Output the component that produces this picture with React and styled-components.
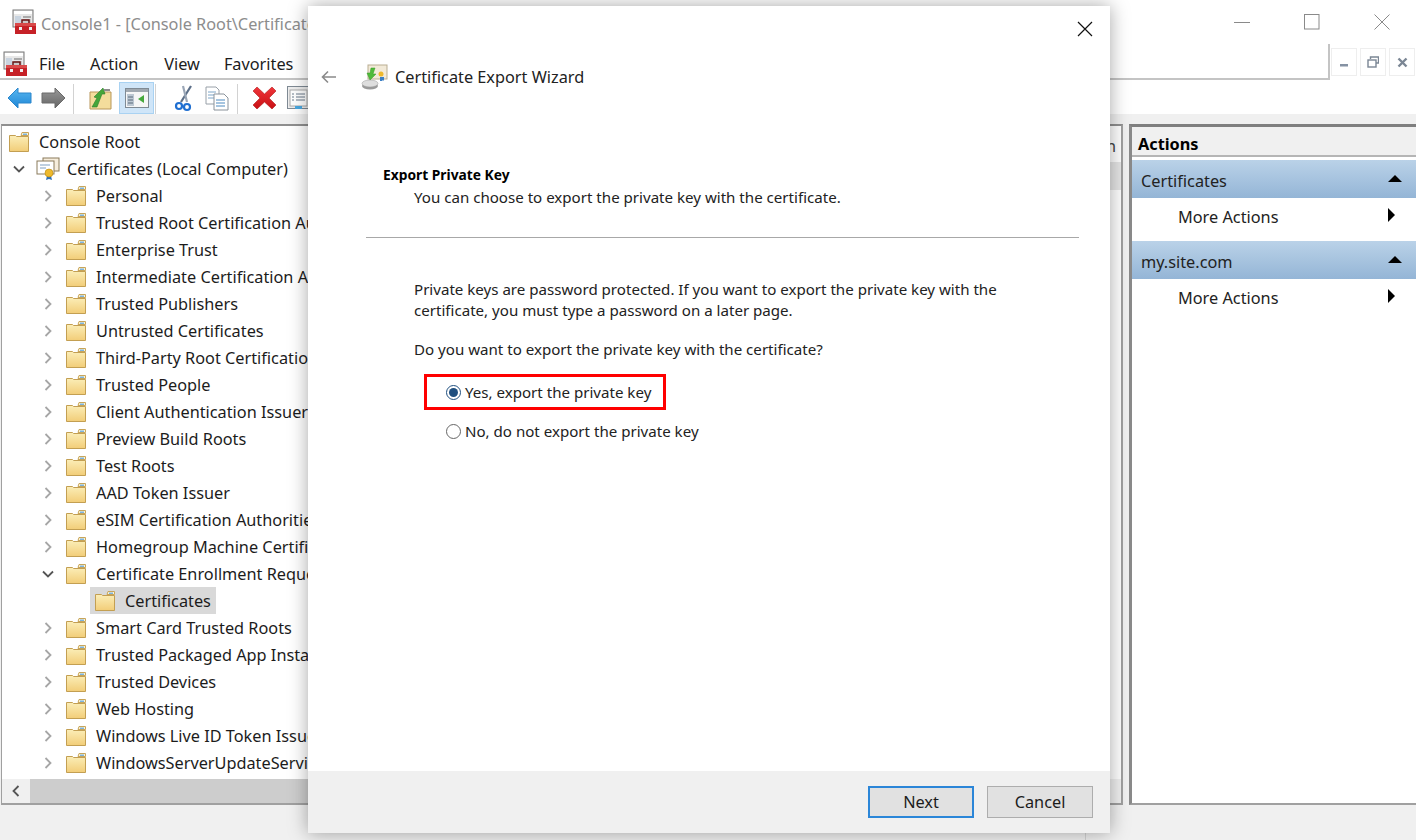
import React from "react";
import styled, { createGlobalStyle } from "styled-components";

const FONT = `"Noto Sans", "Open Sans", "Liberation Sans", sans-serif`;

const Global = createGlobalStyle`
  html, body { margin: 0; padding: 0; background: #fff; }
  body { font-family: ${FONT}; color: #1a1a1a; }
  #root { width: 1416px; height: 840px; overflow: hidden; }
`;

const Desktop = styled.div`
  position: relative;
  width: 1416px;
  height: 840px;
  overflow: hidden;
  background: #f0f0f0;
  display: flex;
  flex-direction: column;
  font-size: 16.3px;
`;
const TitleBar = styled.div`
  height: 44px;
  background: #fff;
  display: flex;
  align-items: center;
  padding-left: 12px;
  flex: none;
`;
const TitleText = styled.span`
  margin-left: 3px;
  padding-top: 3px;
  color: #8d8d8d;
  flex: 1;
  white-space: nowrap;
  overflow: hidden;
`;
const WinControls = styled.div`
  display: flex;
  align-items: center;
  height: 100%;
  margin-right: 26px;
  gap: 54px;
  & svg { display: block; }
`;
const MenuBar = styled.div`
  height: 36px;
  background: #fff;
  display: flex;
  align-items: stretch;
  flex: none;
`;
const MenuLeft = styled.div`
  flex: 1;
  display: flex;
  align-items: center;
  padding: 5px 0 0 3px;
  border-bottom: 2px solid #c4c4c4;
  border-right: 2px solid #c4c4c4;
`;
const MenuItem = styled.span`
  margin-left: ${(p) => p.$gap}px;
  color: #1c1c1c;
`;
const MdiControls = styled.div`
  width: 86px;
  display: flex;
  gap: 3px;
  padding: 4px 0 0 1px;
  box-sizing: border-box;
`;
const MdiButton = styled.div`
  width: 26px;
  height: 28px;
  display: flex;
  align-items: center;
  justify-content: center;
  background: #fff;
  border: 1px solid #eeeeee;
  box-sizing: border-box;
`;
const Toolbar = styled.div`
  height: 34px;
  background: #fff;
  display: flex;
  align-items: flex-end;
  flex: none;
  padding-left: 7px;
`;
const ToolIcon = styled.div`
  margin-left: ${(p) => p.$gap || 0}px;
  width: ${(p) => p.$w}px;
  height: 32px;
  display: flex;
  align-items: center;
  justify-content: center;
  box-sizing: border-box;
  ${(p) => p.$active && `background:#cfe5f8;border:1px solid #a9d2f2;`}
`;
const ToolSep = styled.div`
  width: 1px;
  height: 30px;
  background: #d2d2d2;
  margin-left: ${(p) => p.$gap}px;
  align-self: flex-end;
`;
const Panes = styled.div`
  flex: 1;
  min-height: 0;
  display: flex;
  margin-top: 10px;
  background: #f0f0f0;
`;
const TreePane = styled.div`
  width: 320px;
  flex: none;
  margin-left: 1px;
  border-top: 2px solid #8f8f8f;
  border-left: 1px solid #a0a0a0;
  border-bottom: 2px solid #a0a0a0;
  background: #fff;
  display: flex;
  flex-direction: column;
  box-sizing: border-box;
  overflow: hidden;
`;
const ListPane = styled.div`
  width: 802px;
  flex: none;
  border-top: 2px solid #8f8f8f;
  border-bottom: 2px solid #a0a0a0;
  border-right: 2px solid #a0a0a0;
  background: #fff;
  display: flex;
  flex-direction: column;
  box-sizing: border-box;
`;
const ListHeader = styled.div`
  height: 36px;
  flex: none;
  text-align: right;
  padding: 8px 5px 0 0;
  box-sizing: border-box;
  line-height: 24px;
  color: #444;
`;
const ListRow = styled.div`
  height: 28px;
  flex: none;
  background: #e6e6e6;
`;
const ListFill = styled.div`
  flex: 1;
`;
const TreeList = styled.div`
  flex: 1;
  padding-top: 2px;
  overflow: hidden;
`;
const Row = styled.div`
  height: 27px;
  display: flex;
  align-items: center;
  padding-left: ${(p) => p.$indent}px;
  white-space: nowrap;
`;
const Chevron = styled.span`
  width: 16px;
  margin-right: ${(p) => p.$mr}px;
  display: flex;
  justify-content: center;
  flex: none;
`;
const RowLabel = styled.span`
  margin-left: ${(p) => p.$ml ?? 9}px;
  color: #1c1c1c;
`;
const Selected = styled.div`
  display: flex;
  align-items: center;
  height: 27px;
  background: #d9d9d9;
  padding: 0 5px 0 4px;
`;
const HScroll = styled.div`
  height: 24px;
  background: #f0f0f0;
  display: flex;
  flex: none;
`;
const ScrollBtn = styled.div`
  width: 28px;
  display: flex;
  align-items: center;
  justify-content: center;
`;
const ScrollThumb = styled.div`
  flex: 1;
  background: #cdcdcd;
`;
const ActionsPane = styled.div`
  margin-left: 6px;
  flex: 1;
  border-top: 3px solid #7f7f7f;
  border-left: 3px solid #8a8a8a;
  border-bottom: 2px solid #a0a0a0;
  background: #fff;
  box-sizing: border-box;
`;
const ActionsTitle = styled.div`
  height: 30px;
  background: #f0f0f0;
  border-bottom: 2px solid #b5b5b5;
  box-sizing: border-box;
  padding: 6px 0 0 6px;
  font-weight: 700;
  line-height: 22px;
  color: #000;
`;
const SectionHead = styled.div`
  height: 38px;
  margin-top: ${(p) => p.$mt}px;
  background: linear-gradient(#bad2e8, #94b5d6);
  display: flex;
  align-items: center;
  justify-content: space-between;
  padding: 4px 14px 0 9px;
  box-sizing: border-box;
  color: #222;
`;
const ActionRow = styled.div`
  height: 38px;
  display: flex;
  align-items: center;
  justify-content: space-between;
  padding: 0 14px 0 46px;
  color: #222;
`;
const UpTri = styled.span`
  width: 0;
  height: 0;
  margin-top: -6px;
  border-left: 7px solid transparent;
  border-right: 7px solid transparent;
  border-bottom: 7px solid #000;
`;
const RightTri = styled.span`
  width: 0;
  height: 0;
  margin-right: 7px;
  margin-top: -5px;
  border-top: 7px solid transparent;
  border-bottom: 7px solid transparent;
  border-left: 7px solid #000;
`;
const StatusBar = styled.div`
  height: 35px;
  flex: none;
  background: #f0f0f0;
  padding-left: 1085px;
  display: flex;
`;
const StatusCell = styled.div`
  flex: 1;
  border-left: 1px solid #d4d4d4;
`;

/* Wizard window lies over the console */
const Wizard = styled.div`
  position: absolute;
  left: 308px;
  top: 6px;
  width: 802px;
  height: 827px;
  background: #fff;
  box-shadow: 0 0 18px rgba(0, 0, 0, 0.35);
  display: flex;
  flex-direction: column;
`;
const WizardClose = styled.div`
  position: absolute;
  right: 17px;
  top: 15px;
  & svg { display: block; }
`;
const WizardTitleRow = styled.div`
  display: flex;
  align-items: center;
  height: 30px;
  margin-top: 56px;
  padding-left: 13px;
  flex: none;
`;
const BackArrow = styled.svg`
  margin-right: 24px;
  flex: none;
`;
const WizardTitle = styled.span`
  margin-left: 7px;
  color: #222;
`;
const WizardBody = styled.div`
  flex: 1;
  display: flex;
  flex-direction: column;
  padding: 0 31px 0 58px;
  min-height: 0;
`;
const HeadBlock = styled.div`
  padding: 74px 0 29px 17px;
  border-bottom: 1px solid #a8a8a8;
`;
const StepName = styled.div`
  font-weight: 700;
  font-size: 13.8px;
  line-height: 18px;
  color: #000;
`;
const StepSub = styled.div`
  margin-left: 31px;
  margin-top: 2px;
  font-size: 15.1px;
  line-height: 22px;
  color: #222;
`;
const Content = styled.div`
  padding: 41px 0 0 48px;
  font-size: 15.1px;
  line-height: 21px;
  color: #222;
`;
const Para = styled.p`
  margin: 0 0 18px;
  width: 620px;
`;
const Radio = styled.div`
  display: flex;
  align-items: center;
  height: 30px;
  padding-left: 32px;
`;
const RadioDot = styled.span`
  width: 15px;
  height: 15px;
  border-radius: 50%;
  border: 1px solid ${(p) => (p.$on ? "#1f4f7f" : "#666")};
  box-sizing: border-box;
  display: flex;
  align-items: center;
  justify-content: center;
  margin-right: 4px;
  flex: none;
  &::after {
    content: "";
    width: 9px;
    height: 9px;
    border-radius: 50%;
    background: ${(p) => (p.$on ? "#1f4f7f" : "transparent")};
  }
`;
const Highlight = styled.div`
  width: 242px;
  height: 36px;
  margin-top: -4px;
  margin-left: 10px;
  box-sizing: border-box;
  border: 3px solid #f00;
  display: flex;
  align-items: center;
  padding-left: 19px;
`;
const RadioPlain = styled(Radio)`
  margin-top: 6px;
`;
const Footer = styled.div`
  height: 62px;
  flex: none;
  background: #f0f0f0;
  display: flex;
  justify-content: flex-end;
  align-items: flex-start;
  gap: 13px;
  padding: 15px 17px 0 0;
  box-sizing: border-box;
`;
const Button = styled.div`
  width: 106px;
  height: 32px;
  background: #e1e1e1;
  border: ${(p) => (p.$primary ? "2px solid #2b86d8" : "1px solid #adadad")};
  box-sizing: border-box;
  display: flex;
  align-items: center;
  justify-content: center;
  color: #1c1c1c;
`;

/* ---- drawings ---- */
const Folder = () => (
  <svg width="22" height="22" viewBox="0 0 22 22" style={{ flex: "none" }}>
    <defs>
      <linearGradient id="fg" x1="0" y1="0" x2="0" y2="1">
        <stop offset="0" stopColor="#fbeeb8" />
        <stop offset="1" stopColor="#f2cd78" />
      </linearGradient>
    </defs>
    <path d="M13 4.500l1-3h6.500v3z" fill="#fdf5d5" stroke="#c8a55a" />
    <path d="M1.500 20.500v-16h6l1 1h12v15z" fill="url(#fg)" stroke="#c39f52" />
    <rect x="15" y="2.500" width="4" height="1.500" fill="#7db4e0" />
  </svg>
);

const Toolbox = () => (
  <svg width="26" height="26" viewBox="0 0 26 26" style={{ flex: "none" }}>
    <rect x="1" y="1" width="20" height="17" fill="#e8e8e8" stroke="#777" />
    <rect x="2" y="2" width="18" height="3" fill="#fff" />
    <rect x="3" y="7" width="6" height="8" fill="#c9d4e0" />
    <rect x="11" y="7" width="8" height="2" fill="#aaa" />
    <path d="M11 11h8M11 13h8" stroke="#aaa" />
    <path d="M10 14v-3h7v3" fill="none" stroke="#611" strokeWidth="1.500" />
    <rect x="3" y="14" width="21" height="11" fill="#c62127" />
    <rect x="3" y="14" width="21" height="3" fill="#d94a4a" />
    <rect x="7" y="18" width="3" height="3" fill="#eee" />
    <rect x="17" y="18" width="3" height="3" fill="#eee" />
  </svg>
);

const NavArrow = ({ dir, id, from, to, dark }) => (
  <svg width="25" height="22" viewBox="0 0 25 22">
    <defs>
      <linearGradient id={id} x1="0" y1="0" x2="0" y2="1">
        <stop offset="0" stopColor={from} />
        <stop offset="1" stopColor={to} />
      </linearGradient>
    </defs>
    <path
      d={dir === "l" ? "M1 11 11 1v5h13v10H11v5z" : "M24 11 14 1v5H1v10h13v5z"}
      fill={`url(#${id})`}
      stroke={dark}
      strokeWidth="1"
    />
  </svg>
);

const UpFolder = () => (
  <svg width="23" height="24" viewBox="0 0 23 24">
    <path d="M1 6h21v17H1z" fill="#f4dd9c" stroke="#b9975a" />
    <path d="M3 21 8 12 5 11l9-9 2 6h-3l-5 13z" fill="#45a63a" stroke="#2e7d2b" strokeWidth=".6" />
    <rect x="15" y="3" width="6" height="2" fill="#8c8c8c" />
  </svg>
);

const ShowHide = () => (
  <svg width="24" height="20" viewBox="0 0 24 20">
    <rect x=".5" y=".5" width="23" height="19" fill="#f6f6f6" stroke="#7f8a94" />
    <rect x="1" y="1" width="22" height="3" fill="#a0a8b0" />
    <rect x="2" y="6" width="7" height="12" fill="#bcc7d2" />
    <path d="M3 9h5M3 12h5M3 15h5" stroke="#5b6b7b" />
    <path d="M19 7v8l-6-4z" fill="#46a83d" />
  </svg>
);

const Scissors = () => (
  <svg width="20" height="27" viewBox="0 0 20 27">
    <path d="M18 1 8 17" stroke="#5c6f88" strokeWidth="2.200" />
    <path d="M10 1l4 16" stroke="#9aa6b6" strokeWidth="2.200" />
    <circle cx="6" cy="21" r="3" fill="none" stroke="#1f6fd1" strokeWidth="2.200" />
    <circle cx="14" cy="22" r="3" fill="none" stroke="#1f6fd1" strokeWidth="2.200" />
  </svg>
);

const CopyDocs = () => (
  <svg width="25" height="25" viewBox="0 0 25 25">
    <path d="M1 1h10l3 3v14H1z" fill="#fff" stroke="#98a0a8" />
    <path d="M3 6h8M3 9h8M3 12h8" stroke="#7ca5c8" />
    <path d="M9 8h10l4 4v12H9z" fill="#fff" stroke="#8a929a" />
    <path d="M11 14h9M11 17h9M11 20h9" stroke="#4c8ac0" />
  </svg>
);

const RedX = () => (
  <svg width="25" height="24" viewBox="0 0 25 24">
    <defs>
      <linearGradient id="rx" x1="0" y1="0" x2="0" y2="1">
        <stop offset="0" stopColor="#f0353a" />
        <stop offset="1" stopColor="#c80f14" />
      </linearGradient>
    </defs>
    <path d="M1 5 5 1l7.500 7L20 1l4 4-7 7 7 7-4 4-7.500-7L5 23l-4-4 7-7z" fill="url(#rx)" stroke="#b01a1a" strokeWidth=".6" />
  </svg>
);

const Properties = () => (
  <svg width="23" height="24" viewBox="0 0 23 24">
    <rect x=".5" y=".5" width="22" height="22" fill="#eee" stroke="#7f8a94" />
    <rect x="3" y="4" width="17" height="16" fill="#fff" stroke="#aaa" />
    <path d="M5 8h2M9 8h9M5 11h2M9 11h9M5 14h2M9 14h9" stroke="#6b7b8b" />
    <rect x="8" y="20" width="7" height="3" fill="#4aa8e0" />
  </svg>
);

const CertFolder = () => (
  <svg width="24" height="24" viewBox="0 0 24 24" style={{ flex: "none" }}>
    <rect x="7" y="1" width="16" height="13" fill="#f6eddc" stroke="#8a7a5a" />
    <rect x="1" y="4" width="17" height="13" fill="#fff" stroke="#8a7a5a" />
    <path d="M4 8h10M4 11h6" stroke="#7f9fc0" />
    <path d="M11 19l-1 4 3-1 3 1-1-4z" fill="#2f6fb5" />
    <circle cx="13" cy="16" r="4" fill="#eeb92c" stroke="#b98a10" strokeWidth=".6" />
  </svg>
);

const WizardIcon = () => (
  <svg width="27" height="26" viewBox="0 0 27 26" style={{ flex: "none" }}>
    <rect x="7" y="1" width="19" height="14" fill="#f2ead8" stroke="#b9ad92" />
    <circle cx="20" cy="10" r="2.500" fill="#eeb92c" />
    <path d="M19 13v4h2l1-1 1 1v-4z" fill="#3b7fc4" />
    <ellipse cx="9" cy="22" rx="8" ry="3.500" fill="#9a9a9a" />
    <ellipse cx="9" cy="19.500" rx="8" ry="3.500" fill="#dedede" stroke="#999" strokeWidth=".5" />
    <path d="M14 4l-2 6h3l-6 6-3-7h3l1-5z" fill="#4fbb3a" stroke="#3a9a2a" strokeWidth=".5" />
  </svg>
);

const ChevronRight = () => (
  <svg width="8" height="12" viewBox="0 0 8 12">
    <path d="M1.500 1 6.500 6l-5 5" fill="none" stroke="#a6a6a6" strokeWidth="1.800" />
  </svg>
);
const ChevronDown = () => (
  <svg width="12" height="8" viewBox="0 0 12 8">
    <path d="M1 1.500 6 6.500l5-5" fill="none" stroke="#555" strokeWidth="1.800" />
  </svg>
);

const folders = [
  "Personal",
  "Trusted Root Certification Authorities",
  "Enterprise Trust",
  "Intermediate Certification Authorities",
  "Trusted Publishers",
  "Untrusted Certificates",
  "Third-Party Root Certification Authorities",
  "Trusted People",
  "Client Authentication Issuers",
  "Preview Build Roots",
  "Test Roots",
  "AAD Token Issuer",
  "eSIM Certification Authorities",
  "Homegroup Machine Certificates",
];
const foldersAfter = [
  "Smart Card Trusted Roots",
  "Trusted Packaged App Installation Authorities",
  "Trusted Devices",
  "Web Hosting",
  "Windows Live ID Token Issuer",
  "WindowsServerUpdateServices",
];

const FolderRow = ({ label, open }) => (
  <Row $indent={38}>
    <Chevron $mr={9}>{open ? <ChevronDown /> : <ChevronRight />}</Chevron>
    <Folder />
    <RowLabel>{label}</RowLabel>
  </Row>
);

export default function App() {
  return (
    <>
      <Global />
      <Desktop>
        <TitleBar>
          <Toolbox />
          <TitleText>Console1 - [Console Root\Certificates (Local Computer)\Certificate Enrollment Requests\Certificates]</TitleText>
          <WinControls>
            <svg width="16" height="16" viewBox="0 0 16 16"><path d="M0 8.500h16" stroke="#8a8a8a" /></svg>
            <svg width="16" height="16" viewBox="0 0 16 16"><rect x=".5" y=".5" width="14.500" height="14.500" fill="none" stroke="#8a8a8a" /></svg>
            <svg width="16" height="16" viewBox="0 0 16 16"><path d="M.5.500l15 15M15.500.500l-15 15" stroke="#8a8a8a" /></svg>
          </WinControls>
        </TitleBar>
        <MenuBar>
          <MenuLeft>
            <Toolbox />
            <MenuItem $gap={10}>File</MenuItem>
            <MenuItem $gap={25}>Action</MenuItem>
            <MenuItem $gap={26}>View</MenuItem>
            <MenuItem $gap={24}>Favorites</MenuItem>
          </MenuLeft>
          <MdiControls>
            <MdiButton>
              <svg width="10" height="10" viewBox="0 0 10 10"><rect x="1" y="7" width="8" height="2.500" fill="#8592a3" /></svg>
            </MdiButton>
            <MdiButton>
              <svg width="12" height="12" viewBox="0 0 12 12"><path d="M3.500 3V1h8v6H9" fill="none" stroke="#7b8694" strokeWidth="1.400" /><rect x="1" y="4" width="8" height="7" fill="none" stroke="#7b8694" strokeWidth="1.400" /></svg>
            </MdiButton>
            <MdiButton>
              <svg width="11" height="11" viewBox="0 0 11 11"><path d="M1.500 1.500l8 8M9.500 1.500l-8 8" stroke="#7b8694" strokeWidth="2.400" /></svg>
            </MdiButton>
          </MdiControls>
        </MenuBar>
        <Toolbar>
          <ToolIcon $w={25}><NavArrow dir="l" id="nb" from="#58b7f0" to="#1f86d6" dark="#2a86cc" /></ToolIcon>
          <ToolIcon $w={25} $gap={9}><NavArrow dir="r" id="ng" from="#9a9a9a" to="#656565" dark="#6a6a6a" /></ToolIcon>
          <ToolSep $gap={7} />
          <ToolIcon $w={23} $gap={15}><UpFolder /></ToolIcon>
          <ToolIcon $w={35} $gap={7} $active><ShowHide /></ToolIcon>
          <ToolSep $gap={1} />
          <ToolIcon $w={20} $gap={17}><Scissors /></ToolIcon>
          <ToolIcon $w={25} $gap={12}><CopyDocs /></ToolIcon>
          <ToolSep $gap={7} />
          <ToolIcon $w={25} $gap={14}><RedX /></ToolIcon>
          <ToolIcon $w={23} $gap={10}><Properties /></ToolIcon>
        </Toolbar>
        <Panes>
          <TreePane>
            <TreeList>
              <Row $indent={6}>
                <Folder />
                <RowLabel>Console Root</RowLabel>
              </Row>
              <Row $indent={9}>
                <Chevron $mr={9}><ChevronDown /></Chevron>
                <CertFolder />
                <RowLabel $ml={7}>Certificates (Local Computer)</RowLabel>
              </Row>
              {folders.map((f) => <FolderRow key={f} label={f} />)}
              <FolderRow label="Certificate Enrollment Requests" open />
              <Row $indent={88}>
                <Selected>
                  <Folder />
                  <RowLabel>Certificates</RowLabel>
                </Selected>
              </Row>
              {foldersAfter.map((f) => <FolderRow key={f} label={f} />)}
            </TreeList>
            <HScroll>
              <ScrollBtn>
                <svg width="8" height="12" viewBox="0 0 8 12"><path d="M6.500 1 1.500 6l5 5" fill="none" stroke="#555" strokeWidth="1.800" /></svg>
              </ScrollBtn>
              <ScrollThumb />
            </HScroll>
          </TreePane>
          <ListPane>
            <ListHeader>Certification</ListHeader>
            <ListRow />
            <ListFill />
            <HScroll />
          </ListPane>
          <ActionsPane>
            <ActionsTitle>Actions</ActionsTitle>
            <SectionHead $mt={3}>Certificates<UpTri /></SectionHead>
            <ActionRow>More Actions<RightTri /></ActionRow>
            <SectionHead $mt={5}>my.site.com<UpTri /></SectionHead>
            <ActionRow>More Actions<RightTri /></ActionRow>
          </ActionsPane>
        </Panes>
        <StatusBar><StatusCell /></StatusBar>

        <Wizard>
          <WizardClose>
            <svg width="16" height="16" viewBox="0 0 16 16"><path d="M1 1l14 14M15 1 1 15" stroke="#111" strokeWidth="1.200" /></svg>
          </WizardClose>
          <WizardTitleRow>
            <BackArrow width="16" height="14" viewBox="0 0 16 14"><path d="M15 7H1.500M7 1.500 1.500 7 7 12.500" fill="none" stroke="#8a8a8a" strokeWidth="1.600" /></BackArrow>
            <WizardIcon />
            <WizardTitle>Certificate Export Wizard</WizardTitle>
          </WizardTitleRow>
          <WizardBody>
            <HeadBlock>
              <StepName>Export Private Key</StepName>
              <StepSub>You can choose to export the private key with the certificate.</StepSub>
            </HeadBlock>
            <Content>
              <Para>Private keys are password protected. If you want to export the private key with the certificate, you must type a password on a later page.</Para>
              <Para>Do you want to export the private key with the certificate?</Para>
              <Highlight>
                <RadioDot $on />
                Yes, export the private key
              </Highlight>
              <RadioPlain>
                <RadioDot />
                No, do not export the private key
              </RadioPlain>
            </Content>
          </WizardBody>
          <Footer>
            <Button $primary>Next</Button>
            <Button>Cancel</Button>
          </Footer>
        </Wizard>
      </Desktop>
    </>
  );
}
